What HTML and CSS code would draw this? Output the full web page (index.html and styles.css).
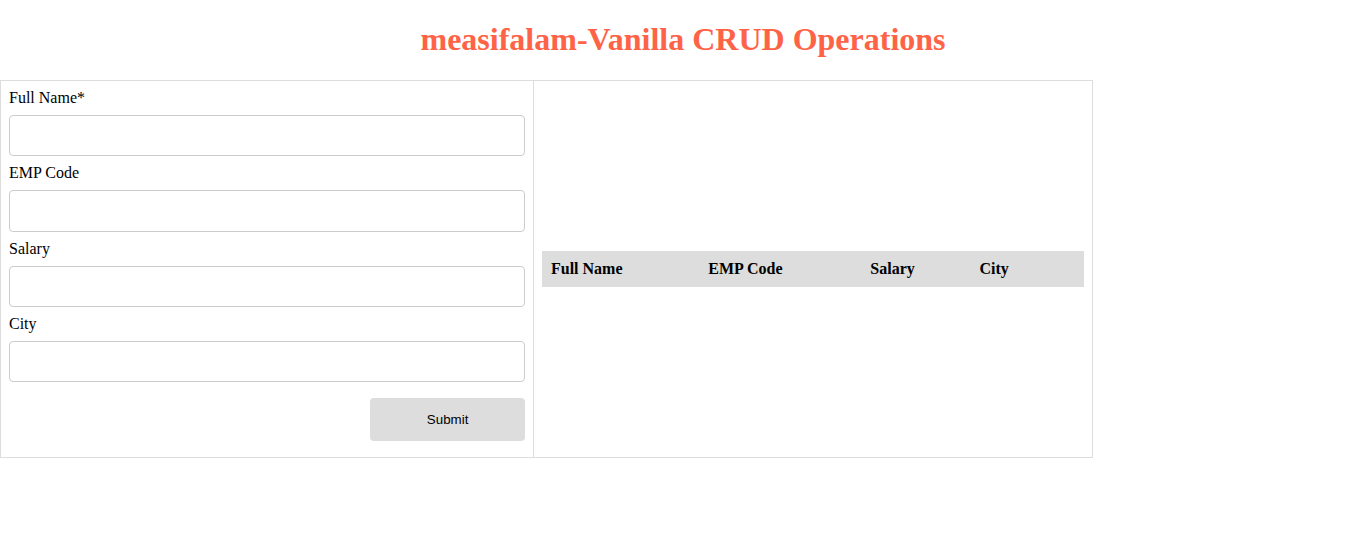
FILE: index.html
```html
<!DOCTYPE html>
<html lang="en">
<head>
<meta charset="utf-8">
<title>measifalam-Vanilla CRUD Operations</title>
<link rel="stylesheet" href="styles.css">
</head>
<body>
<h1 class="title">measifalam-Vanilla CRUD Operations</h1>
<table class="layout">
  <tr>
    <td class="form-cell">
      <form class="emp-form" autocomplete="off">
        <div class="field">
          <label class="field-label">Full Name*</label>
          <input class="field-input" type="text" name="fullName">
        </div>
        <div class="field">
          <label class="field-label">EMP Code</label>
          <input class="field-input" type="text" name="empCode">
        </div>
        <div class="field">
          <label class="field-label">Salary</label>
          <input class="field-input" type="text" name="salary">
        </div>
        <div class="field">
          <label class="field-label">City</label>
          <input class="field-input" type="text" name="city">
        </div>
        <div class="form-actions">
          <input class="submit-btn" type="submit" value="Submit">
        </div>
      </form>
    </td>
    <td class="list-cell">
      <table class="list">
        <thead>
          <tr>
            <th>Full Name</th>
            <th>EMP Code</th>
            <th>Salary</th>
            <th>City</th>
            <th></th>
          </tr>
        </thead>
        <tbody></tbody>
      </table>
    </td>
  </tr>
</table>
</body>
</html>
```
FILE: styles.css
```css
body {
  margin: 0;
  font-family: "Liberation Serif", "Times New Roman", serif;
  font-size: 16px;
  color: #000;
  background: #fff;
}

.title {
  text-align: center;
  color: tomato;
  font-size: 32px;
  font-weight: bold;
  margin: 21.44px 0;
  padding-left: 4px;
}

.layout {
  border-collapse: collapse;
  width: 1093px;
}

.layout > tbody > tr > td {
  border: 1px solid #dddddd;
  padding: 8px;
  text-align: left;
}

.form-cell {
  width: 516px;
  vertical-align: top;
}

.list-cell {
  vertical-align: middle;
}

.field-label {
  display: block;
  line-height: 18px;
}

.field-input {
  display: block;
  width: 100%;
  height: 41.333px;
  box-sizing: border-box;
  padding: 12px 20px;
  margin: 8px 0;
  border: 1px solid #ccc;
  border-radius: 4px;
  font-family: "Liberation Sans", Arial, sans-serif;
  font-size: 13.333px;
}

.form-actions {
  display: flex;
  justify-content: flex-end;
}

.submit-btn {
  width: 30%;
  background-color: #ddd;
  color: #000;
  padding: 14px 20px;
  margin: 8px 0;
  border: none;
  border-radius: 4px;
  font-family: "Liberation Sans", Arial, sans-serif;
  font-size: 13.333px;
  cursor: pointer;
}

.list {
  width: 100%;
  border-collapse: collapse;
}

.list th {
  background-color: #ddd;
  border: 1px solid #ddd;
  padding: 8px;
  line-height: 18.4px;
  text-align: left;
  font-weight: bold;
}
```
